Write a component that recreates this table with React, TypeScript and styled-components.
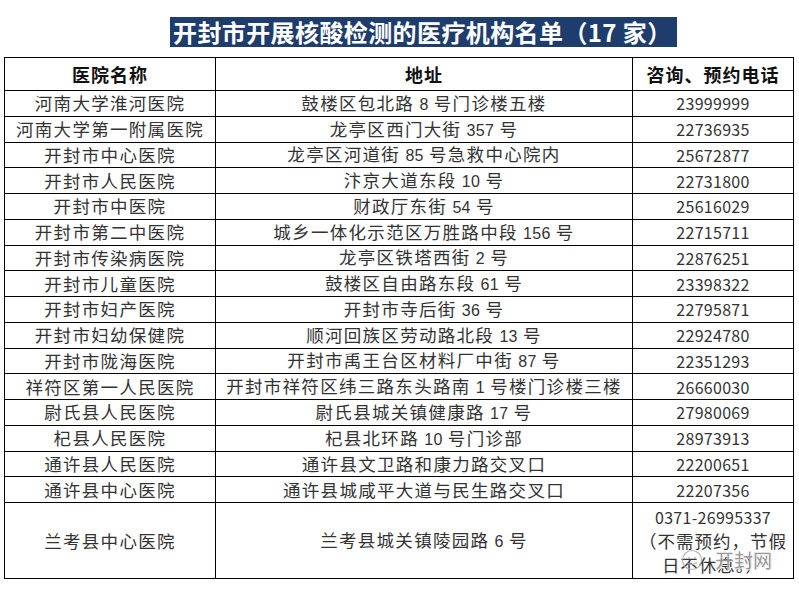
import React from 'react';
import styled, { createGlobalStyle } from 'styled-components';

const GlobalStyle = createGlobalStyle`
  html, body {
    margin: 0;
    padding: 0;
    background: #ffffff;
  }
  body {
    font-family: "Noto Sans CJK SC", sans-serif;
  }
`;

type Row = { name: string; address: string; phone: string };

const rows: Row[] = [
  { name: '河南大学淮河医院', address: '鼓楼区包北路 8 号门诊楼五楼', phone: '23999999' },
  { name: '河南大学第一附属医院', address: '龙亭区西门大街 357 号', phone: '22736935' },
  { name: '开封市中心医院', address: '龙亭区河道街 85 号急救中心院内', phone: '25672877' },
  { name: '开封市人民医院', address: '汴京大道东段 10 号', phone: '22731800' },
  { name: '开封市中医院', address: '财政厅东街 54 号', phone: '25616029' },
  { name: '开封市第二中医院', address: '城乡一体化示范区万胜路中段 156 号', phone: '22715711' },
  { name: '开封市传染病医院', address: '龙亭区铁塔西街 2 号', phone: '22876251' },
  { name: '开封市儿童医院', address: '鼓楼区自由路东段 61 号', phone: '23398322' },
  { name: '开封市妇产医院', address: '开封市寺后街 36 号', phone: '22795871' },
  { name: '开封市妇幼保健院', address: '顺河回族区劳动路北段 13 号', phone: '22924780' },
  { name: '开封市陇海医院', address: '开封市禹王台区材料厂中街 87 号', phone: '22351293' },
  { name: '祥符区第一人民医院', address: '开封市祥符区纬三路东头路南 1 号楼门诊楼三楼', phone: '26660030' },
  { name: '尉氏县人民医院', address: '尉氏县城关镇健康路 17 号', phone: '27980069' },
  { name: '杞县人民医院', address: '杞县北环路 10 号门诊部', phone: '28973913' },
  { name: '通许县人民医院', address: '通许县文卫路和康力路交叉口', phone: '22200651' },
  { name: '通许县中心医院', address: '通许县城咸平大道与民生路交叉口', phone: '22207356' },
];

const Page = styled.div`
  padding: 17px 0 0 4px;
  width: 799px;
  box-sizing: border-box;
`;

const Title = styled.div`
  margin-left: 166px;
  width: 507px;
  height: 30px;
  background: #1f3d6c;
  color: #ffffff;
  font-family: "Noto Sans CJK SC", sans-serif;
  font-weight: 700;
  font-size: 24px;
  line-height: 30px;
  letter-spacing: 0.4px;
  padding-left: 3px;
  box-sizing: border-box;
  white-space: nowrap;
  overflow: hidden;
`;

const Table = styled.table`
  margin-top: 10px;
  width: 789px;
  border-collapse: collapse;
  table-layout: fixed;
`;

const HeadCell = styled.th`
  border: 1px solid #000;
  height: 32px;
  padding: 0;
  text-align: center;
  vertical-align: middle;
  font-family: "Noto Sans CJK SC", serif;
  font-weight: 700;
  font-size: 18px;
  line-height: 18px;
  letter-spacing: 1px;
  color: #111;
`;

const Cell = styled.td<{ $tall?: boolean; $digits?: boolean }>`
  border: 1px solid #000;
  height: ${(p) => (p.$tall ? '75px' : '24.75px')};
  padding: 0;
  text-align: center;
  vertical-align: middle;
  white-space: nowrap;
  font-family: "Noto Sans CJK SC", sans-serif;
  font-size: ${(p) => (p.$digits ? '16px' : '17.5px')};
  letter-spacing: ${(p) => (p.$digits ? '0.3px' : '1.3px')};
  line-height: 18px;
  color: #333333;
`;

const PhoneCell = styled(Cell)`
  position: relative;
  white-space: normal;
  line-height: 24px;
`;

const Num = styled.span`
  font-family: "Liberation Sans", sans-serif;
  font-size: 16px;
  line-height: 16px;
  letter-spacing: 0.3px;
`;

const Note = styled.span`
  font-family: "Noto Sans CJK SC", sans-serif;
  font-size: 17.5px;
  line-height: 18px;
  letter-spacing: 1px;
`;

const Watermark = styled.div`
  position: absolute;
  left: 48px;
  top: 46px;
  display: flex;
  align-items: center;
  gap: 12px;
  opacity: 0.9;
  pointer-events: none;
`;

const WatermarkText = styled.span`
  font-family: "Noto Sans CJK SC", sans-serif;
  font-size: 19px;
  line-height: 22px;
  letter-spacing: 0;
  color: #8f8f8f;
  text-shadow: 0 0 1px #fff, 1px 1px 0 #e8e8e8;
`;

const withNumbers = (text: string) =>
  text.split(/(\d+)/).map((part, i) => (/^\d+$/.test(part) ? <Num key={i}>{part}</Num> : part));

const WatermarkLogo = () => (
  <svg width="22" height="22" viewBox="0 0 22 22">
    <circle cx="11" cy="11" r="9.5" fill="none" stroke="#b0b0b0" strokeWidth="1.2" />
    <path d="M6 13.5c1.5 1.5 3 2 5 2s3.5-0.6 5-2" fill="none" stroke="#b0b0b0" strokeWidth="1.1" />
    <circle cx="8" cy="9" r="1" fill="#b0b0b0" />
    <circle cx="14" cy="9" r="1" fill="#b0b0b0" />
  </svg>
);

const App: React.FC = () => (
  <Page>
    <GlobalStyle />
    <Title>开封市开展核酸检测的医疗机构名单（17 家）</Title>
    <Table>
      <colgroup>
        <col style={{ width: '211px' }} />
        <col style={{ width: '417px' }} />
        <col style={{ width: '161px' }} />
      </colgroup>
      <thead>
        <tr>
          <HeadCell>医院名称</HeadCell>
          <HeadCell>地址</HeadCell>
          <HeadCell>咨询、预约电话</HeadCell>
        </tr>
      </thead>
      <tbody>
        {rows.map((r) => (
          <tr key={r.name}>
            <Cell>{r.name}</Cell>
            <Cell>{withNumbers(r.address)}</Cell>
            <Cell $digits>{r.phone}</Cell>
          </tr>
        ))}
        <tr>
          <Cell $tall>兰考县中心医院</Cell>
          <Cell $tall>{withNumbers('兰考县城关镇陵园路 6 号')}</Cell>
          <PhoneCell $tall $digits>
            0371-26995337
            <br />
            <Note>（不需预约，节假</Note>
            <br />
            <Note>日不休息。）</Note>
            <Watermark>
              <WatermarkLogo />
              <WatermarkText>开封网</WatermarkText>
            </Watermark>
          </PhoneCell>
        </tr>
      </tbody>
    </Table>
  </Page>
);

export default App;
